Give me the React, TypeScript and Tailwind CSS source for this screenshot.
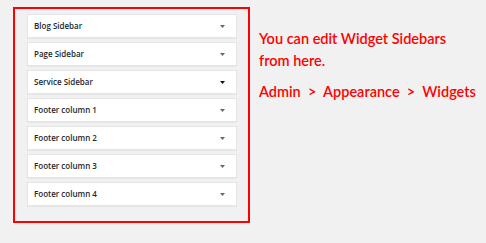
const sidebars = [
  "Blog Sidebar",
  "Page Sidebar",
  "Service Sidebar",
  "Footer column 1",
  "Footer column 2",
  "Footer column 3",
  "Footer column 4",
];

function Caret({ dark }: { dark?: boolean }) {
  return (
    <svg width="5" height="3" viewBox="0 0 5 3" className={dark ? "text-[#111]" : "text-[#666]"}>
      <path d="M0 0h5L2.5 3z" fill="currentColor" />
    </svg>
  );
}

export default function App() {
  return (
    <div className="w-[486px] h-[243px] bg-[#f1f1f1] flex items-start pt-[7px] pl-[13px]">
      {/* widget area list */}
      <div className="w-[237px] border-2 border-[#ff0000] pt-[5px] pb-[15px] pl-[12px] pr-[11px] flex flex-col gap-[4px]">
        {sidebars.map((name, idx) => {
          const key = `${idx} ${name}`;
          return (
            <div
              key={key}
              className="h-[24px] bg-white border border-[#e5e5e5] shadow-[0_1px_1px_rgba(0,0,0,0.04)] flex items-center justify-between pl-[6px] pr-[11px]"
            >
              <span className="text-[8px] font-semibold text-[#23282d] font-['Open_Sans',sans-serif]">
                {name}
              </span>
              <Caret dark={idx === 2} />
            </div>
          );
        })}
      </div>
      <div className="ml-[9px] mt-[21px] text-[#ff0000] text-[14.5px] leading-[22px] font-['Lato',sans-serif] font-semibold">
        <p>You can edit Widget Sidebars</p>
        <p>from here.</p>
        <p className="mt-[9px] whitespace-pre">Admin  &gt;  Appearance  &gt;  Widgets</p>
      </div>
    </div>
  );
}
